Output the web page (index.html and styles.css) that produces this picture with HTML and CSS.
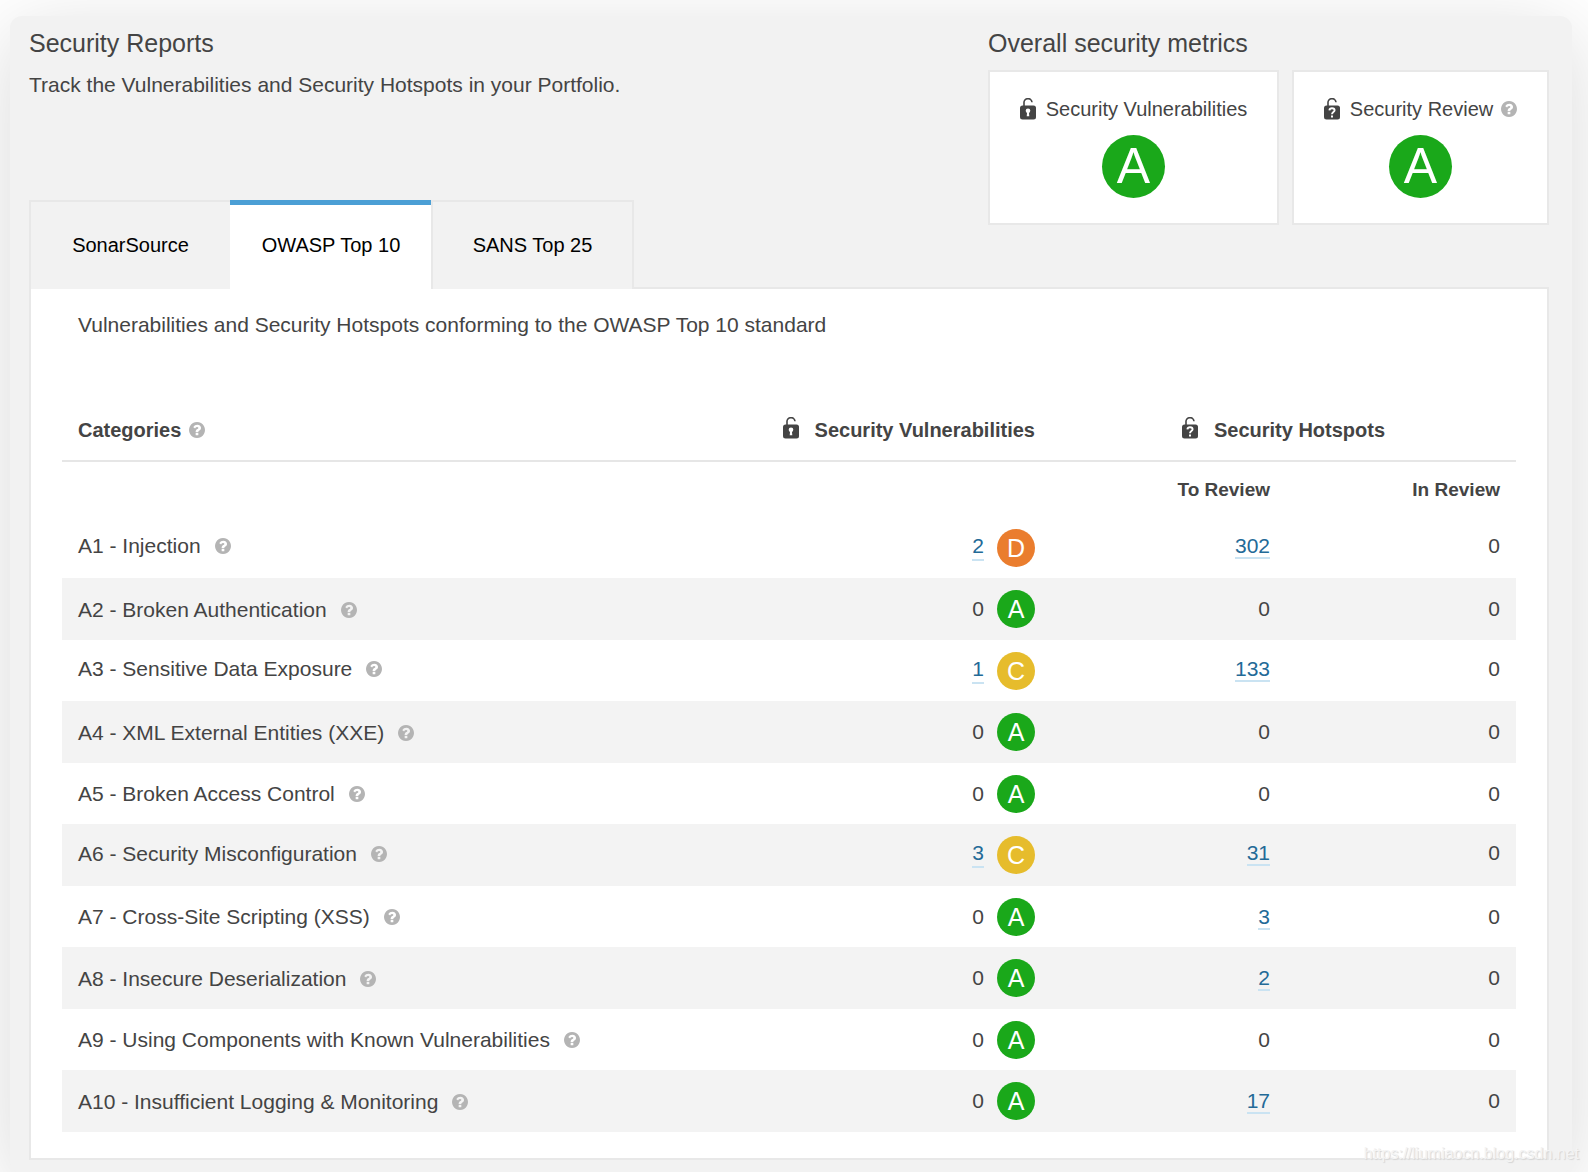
FILE: index.html
```html
<!DOCTYPE html>
<html lang="en">
<head>
<meta charset="utf-8">
<title>Security Reports</title>
<link rel="stylesheet" href="styles.css">
</head>
<body>
<svg class="sprite" aria-hidden="true">
  <symbol id="help" viewBox="0 0 1536 1536"><path fill="currentColor" d="M896 1248v-192q0-14-9-23t-23-9h-192q-14 0-23 9t-9 23v192q0 14 9 23t23 9h192q14 0 23-9t9-23zm256-672q0-88-55.500-163t-138.500-116-170-41q-243 0-371 213-15 24 8 42l132 100q7 6 19 6 16 0 25-12 53-68 86-92 34-24 86-24 48 0 85.500 26t37.500 59q0 38-20 61t-68 45q-63 28-115.500 86.500t-52.500 125.500v36q0 14 9 23t23 9h192q14 0 23-9t9-23q0-19 21.500-49.500t54.500-49.500q32-18 49-28.500t46-35 44.500-48 28-60.500 12.500-81zm384 192q0 209-103 385.500t-279.500 279.500-385.500 103-385.500-103-279.500-279.500-103-385.500 103-385.500 279.500-279.500 385.500-103 385.500 103 279.500 279.500 103 385.500z"/></symbol>
  <symbol id="lock" viewBox="0 0 16 22"><path fill="none" stroke="currentColor" stroke-width="1.600" d="M4 9V5a4 4 0 0 1 8-.7"/><rect y="7.500" width="16" height="14" rx="2.500" fill="currentColor"/><circle cx="8" cy="12.800" r="2.300" fill="#fff"/><path fill="#fff" d="M7.200 13h1.600l.5 5.200H6.700z"/></symbol>
  <symbol id="lock-help" viewBox="0 0 16 22"><path fill="none" stroke="currentColor" stroke-width="1.600" d="M4 9V5a4 4 0 0 1 8-.7"/><rect y="7.500" width="16" height="14" rx="2.500" fill="currentColor"/><path fill="none" stroke="#fff" stroke-width="1.900" d="M5.400 12.300c.2-1.400 1.100-2 2.600-2 1.600 0 2.600.7 2.600 2 0 1.900-2.600 1.700-2.600 4"/><path fill="#fff" d="M7 17.400h2v2H7z"/></symbol>
</svg>
<main class="window">
  <header class="top">
    <div class="intro">
      <div>
        <h1 class="title">Security Reports</h1>
        <p class="lead">Track the Vulnerabilities and Security Hotspots in your Portfolio.</p>
      </div>
      <div class="tabs" role="tablist">
        <button class="tab" type="button" role="tab" aria-selected="false">SonarSource</button>
        <button class="tab tab-active" type="button" role="tab" aria-selected="true">OWASP Top 10</button>
        <button class="tab" type="button" role="tab" aria-selected="false">SANS Top 25</button>
      </div>
    </div>
    <section class="metrics">
      <h2 class="title">Overall security metrics</h2>
      <div class="cards">
        <div class="card">
          <div class="card-label"><svg class="lock"><use href="#lock"/></svg><span>Security Vulnerabilities</span></div>
          <span class="rating rating-large rating-a">A</span>
        </div>
        <div class="card">
          <div class="card-label"><svg class="lock"><use href="#lock-help"/></svg><span class="name name-head">Security Review<svg class="help"><use href="#help"/></svg></span></div>
          <span class="rating rating-large rating-a">A</span>
        </div>
      </div>
    </section>
  </header>
  <section class="report">
    <p class="description">Vulnerabilities and Security Hotspots conforming to the OWASP Top 10 standard</p>
    <table class="table">
      <colgroup><col><col><col class="col-to-review"><col class="col-in-review"></colgroup>
      <thead>
        <tr class="head">
          <th class="left"><span class="name name-head">Categories<svg class="help"><use href="#help"/></svg></span></th>
          <th><span class="head-label"><svg class="lock"><use href="#lock"/></svg>Security Vulnerabilities</span></th>
          <th class="center" colspan="2"><span class="head-label"><svg class="lock"><use href="#lock-help"/></svg>Security Hotspots</span></th>
        </tr>
        <tr class="subhead"><th colspan="2"></th><th>To Review</th><th>In Review</th></tr>
      </thead>
      <tbody>
        <tr class="linked"><td class="left"><span class="name">A1 - Injection<svg class="help"><use href="#help"/></svg></span></td><td class="vulns"><span class="score"><a href="#a1">2</a><span class="rating rating-d">D</span></span></td><td><a href="#a1-review">302</a></td><td>0</td></tr>
        <tr><td class="left"><span class="name">A2 - Broken Authentication<svg class="help"><use href="#help"/></svg></span></td><td class="vulns"><span class="score">0<span class="rating rating-a">A</span></span></td><td>0</td><td>0</td></tr>
        <tr class="linked"><td class="left"><span class="name">A3 - Sensitive Data Exposure<svg class="help"><use href="#help"/></svg></span></td><td class="vulns"><span class="score"><a href="#a3">1</a><span class="rating rating-c">C</span></span></td><td><a href="#a3-review">133</a></td><td>0</td></tr>
        <tr><td class="left"><span class="name">A4 - XML External Entities (XXE)<svg class="help"><use href="#help"/></svg></span></td><td class="vulns"><span class="score">0<span class="rating rating-a">A</span></span></td><td>0</td><td>0</td></tr>
        <tr><td class="left"><span class="name">A5 - Broken Access Control<svg class="help"><use href="#help"/></svg></span></td><td class="vulns"><span class="score">0<span class="rating rating-a">A</span></span></td><td>0</td><td>0</td></tr>
        <tr class="linked"><td class="left"><span class="name">A6 - Security Misconfiguration<svg class="help"><use href="#help"/></svg></span></td><td class="vulns"><span class="score"><a href="#a6">3</a><span class="rating rating-c">C</span></span></td><td><a href="#a6-review">31</a></td><td>0</td></tr>
        <tr><td class="left"><span class="name">A7 - Cross-Site Scripting (XSS)<svg class="help"><use href="#help"/></svg></span></td><td class="vulns"><span class="score">0<span class="rating rating-a">A</span></span></td><td><a href="#a7-review">3</a></td><td>0</td></tr>
        <tr><td class="left"><span class="name">A8 - Insecure Deserialization<svg class="help"><use href="#help"/></svg></span></td><td class="vulns"><span class="score">0<span class="rating rating-a">A</span></span></td><td><a href="#a8-review">2</a></td><td>0</td></tr>
        <tr><td class="left"><span class="name">A9 - Using Components with Known Vulnerabilities<svg class="help"><use href="#help"/></svg></span></td><td class="vulns"><span class="score">0<span class="rating rating-a">A</span></span></td><td>0</td><td>0</td></tr>
        <tr><td class="left"><span class="name">A10 - Insufficient Logging &amp; Monitoring<svg class="help"><use href="#help"/></svg></span></td><td class="vulns"><span class="score">0<span class="rating rating-a">A</span></span></td><td><a href="#a10-review">17</a></td><td>0</td></tr>
      </tbody>
    </table>
  </section>
</main>
<div class="watermark">https://liumiaocn.blog.csdn.net</div>
</body>
</html>
```
FILE: styles.css
```css
* { box-sizing: border-box; }

body {
  position: relative;
  margin: 0;
  padding: 16px 16px 0 10px;
  background: #fff;
  color: #444;
  font: 21px/28px "Liberation Sans", Arial, sans-serif;
}

h1, h2, p { margin: 0; }

.sprite { position: absolute; width: 0; height: 0; }

.window {
  padding: 12px 23px 13px 19px;
  border-radius: 12px;
  background: #f2f2f2;
  box-shadow: 0 16px 80px rgba(0, 0, 0, .15);
}

.top {
  display: flex;
  justify-content: space-between;
}

.intro {
  display: flex;
  flex-direction: column;
  justify-content: space-between;
}

.title {
  font-size: 25px;
  font-weight: 400;
  line-height: 30px;
}

.lead { margin-top: 13px; }

.tabs {
  display: flex;
  margin-bottom: -2px;
}

.tab {
  width: 203px;
  height: 89px;
  margin-right: -2px;
  padding: 0 0 2px;
  border: 2px solid #e8e8e8;
  border-bottom: 0;
  background: #f2f2f2;
  color: #000;
  font: inherit;
  font-size: 20px;
}

.tab-active {
  width: 202px;
  margin-right: -1px;
  padding-bottom: 5px;
  border-width: 5px 0 0;
  border-top-color: #4b9fd5;
  background: #fff;
}

.metrics {
  width: 561px;
  padding-bottom: 62px;
}

.cards {
  display: flex;
  gap: 13px;
  margin-top: 12px;
  font-size: 20px;
}

.card {
  display: flex;
  flex: 1 1 auto;
  flex-direction: column;
  align-items: center;
  gap: 12px;
  padding: 23px 24px 25px;
  border: 2px solid #e8e8e8;
  background: #fff;
}

.card-label {
  display: flex;
  align-items: center;
  gap: 10px;
}

.lock { width: 16px; height: 22px; flex: none; }
.help { width: 16px; height: 16px; flex: none; color: #b4b4b4; }

.rating {
  display: inline-flex;
  align-items: center;
  justify-content: center;
  width: 38px;
  height: 38px;
  border-radius: 50%;
  color: #fff;
  font-size: 25px;
  line-height: 38px;
}

.rating-large {
  width: 63px;
  height: 63px;
  font-size: 50px;
  line-height: 63px;
}

.rating-a { background: #1aa81a; }
.rating-c { background: #e6bc2c; }
.rating-d { background: #ea7d2e; }

.report {
  padding: 22px 31px 26px;
  border: 2px solid #e8e8e8;
  background: #fff;
}

.description { padding: 0 16px; }

.table {
  width: 100%;
  margin-top: 60px;
  border-collapse: collapse;
}

.col-to-review { width: 235px; }
.col-in-review { width: 230px; }

th, td {
  padding: 0 16px;
  text-align: right;
}

.left { text-align: left; }
.center { text-align: center; }

.head { height: 62px; border-bottom: 2px solid #e6e6e6; font-size: 20px; }
.subhead { height: 56px; font-size: 19px; }

.head-label {
  display: inline-flex;
  align-items: center;
  gap: 16px;
  vertical-align: middle;
}

.head-label .lock { margin-bottom: 4px; }

.name {
  display: inline-flex;
  align-items: center;
  gap: 14px;
  vertical-align: middle;
}

.name-head { gap: 8px; }

tbody tr { height: 61px; }
tbody tr:nth-child(even) { height: 62px; background: #f3f3f3; }
.linked td { padding-bottom: 4px; }
.linked .vulns { padding-bottom: 0; }

.score {
  display: inline-flex;
  align-items: center;
  gap: 13px;
  vertical-align: middle;
}

a {
  border-bottom: 2px solid #cae3f2;
  color: #236a97;
  text-decoration: none;
}

.score a { margin-bottom: 2px; line-height: 26px; }

.watermark {
  position: absolute;
  right: 9px;
  bottom: 9px;
  color: #f4f4f4;
  font-size: 16px;
  line-height: 20px;
  text-shadow: 1px 1px 1px #d4d4d4;
}
```
